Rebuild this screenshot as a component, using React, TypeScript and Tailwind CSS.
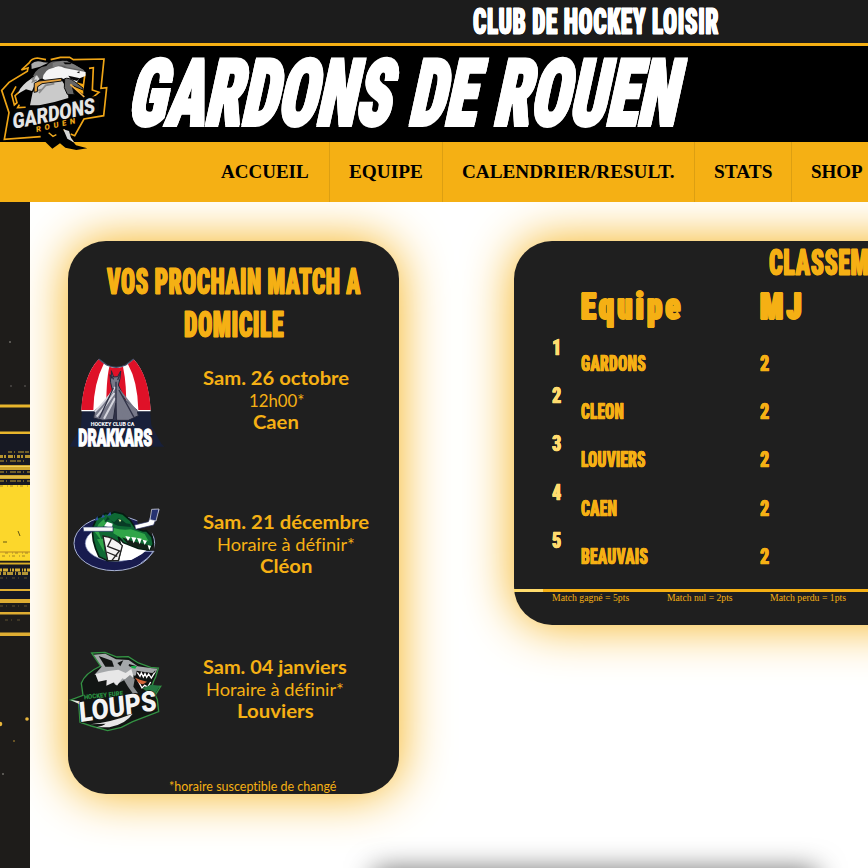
import { useLayoutEffect, useRef, type ReactNode } from "react";

const display = "font-['Roboto'] font-black [font-stretch:75%] leading-none";
const heavy = "tracking-[0.8px] [-webkit-text-stroke:1px_currentColor] [text-shadow:0.8px_0_0_currentColor,-0.8px_0_0_currentColor]";
const small = "tracking-[0.3px] [-webkit-text-stroke:0.5px_currentColor] [text-shadow:0.4px_0_0_currentColor,-0.4px_0_0_currentColor]";
const gill = "font-['Lato'] leading-none [font-variant-ligatures:none]";
const serif = "font-['Liberation_Serif'] leading-none";

/** One line of lettering, condensed or widened to fill the width of its box. */
function Fit({ className, children, skew = 0, inner = "" }: { className: string; children: ReactNode; skew?: number; inner?: string }) {
  const box = useRef<HTMLDivElement>(null);
  const text = useRef<HTMLSpanElement>(null);
  useLayoutEffect(() => {
    if (!box.current || !text.current) return;
    const ratio = box.current.clientWidth / text.current.offsetWidth;
    text.current.style.transform = `skewX(${-skew}deg) scaleX(${ratio})`;
  });
  return (
    <div ref={box} className={`flex shrink-0 whitespace-nowrap ${className}`}>
      <span ref={text} className={`block shrink-0 origin-bottom-left ${inner}`}>{children}</span>
    </div>
  );
}

function GardonsLogo() {
  return (
    <svg viewBox="0 0 336 318" className="absolute top-[2px] left-0 z-10 h-[106px] w-[112px]">
      <path d="M62 67L90 45Q92 30 116 29L155 34L178 28L210 27L221 34L312 32L303 122L320 119L311 204L254 211L228 246L205 264L228 292L262 301L229 306L196 299L180 286L157 302L118 264L13 274L24 215L3 130Z" fill="#000" />
      <path d="M64 66L88 44Q94 31 112 30L138 35M152 35L181 28L209 28L220 35L312 33L303 121L320 119L311 203L252 213L224 263L212 258M122 266L13 274L27 194L5 127L27 103L82 70L84 60L64 66" fill="none" stroke="#efa516" strokeWidth="5" />
      <path d="M48 115L35 139L43 171L51 164L45 143L59 131M267 61L280 59L277 126L297 133L274 152M255 77L249 121L238 112M58 170L53 179L77 178" fill="none" stroke="#f2a516" strokeWidth="5" />
      <path d="M215 116L227 102L249 108L250 139Z" fill="#f5a914" />
      <path d="M95 63L94 48Q107 35 130 43L145 44L120 56Z" fill="#aaa" />
      <path d="M99 84Q110 58 139 54Q151 36 179 41L200 38L211 44L223 50L252 67L257 79L244 84L218 75L176 70L139 88L120 94Z" fill="#626262" />
      <path d="M128 92Q132 65 158 60Q176 50 193 60L257 72L256 84L239 91L229 105L210 99L185 91L139 98Z" fill="#f5f5f5" />
      <path d="M158 61Q181 44 203 58L252 67L224 50L199 39Q174 36 158 46Z" fill="#7d7d7d" />
      <path d="M190 43L216 44L211 49L195 49ZM230 73L239 70L238 76ZM205 83L240 91L231 99L212 94Z" fill="#080808" />
      <path d="M60 123Q78 99 111 82L119 94L108 103L96 129L78 124L54 137Z" fill="#d7d7d7" />
      <path d="M98 133Q119 101 151 101L184 95L203 125L205 150L164 162L118 172L90 172Z" fill="#cacaca" />
      <path d="M117 135L137 112L163 107M106 129L127 124M94 94L103 88L98 101L110 96" fill="none" stroke="#888" strokeWidth="5" />
      <path d="M103 105L117 99L185 91V99L126 107L113 116L112 131L102 133Z" fill="#e2a03d" stroke="#161616" strokeWidth="3" />
      <path d="M194 92Q206 87 224 101L249 120V126L216 112L223 140L202 139L193 119Z" fill="#666" stroke="#0a0a0a" strokeWidth="3" />
      <path d="M211 109L253 147" stroke="#f2b24b" strokeWidth="5" />
      <path d="M39 216L42 186L300 142L296 190L252 203L40 242Z" fill="#050505" />
      <g transform="translate(38 243) rotate(-11) skewX(-10)">
        <text x="0" y="0" fontFamily="Roboto" fontWeight="900" fontSize="64" textLength="252" lengthAdjust="spacingAndGlyphs" fill="#e5e5e5" stroke="#111" strokeWidth="2" paintOrder="stroke">GARDONS</text>
      </g>
      <g transform="translate(109 253) rotate(-13) skewX(-9)">
        <text x="0" y="0" fontFamily="Roboto" fontWeight="900" fontSize="23" textLength="120" lengthAdjust="spacing" fill="#eca417">ROUEN</text>
      </g>
      <path d="M146 254L159 265L169 260M191 244L219 281" fill="none" stroke="#efaa20" strokeWidth="4" />
      <path d="M190 244L207 249L213 270L224 284L202 272Z" fill="#d5d5d5" />
    </svg>
  );
}

function DrakkarsLogo() {
  return (
    <svg viewBox="0 0 300 330" className="h-[110px] w-[100px]">
      <path d="M42 180L246 180L250 226L280 281L289 290L4 290L39 230Z" fill="#18203a" />
      <path d="M92 28L115 44Q144 60 174 45L197 28Q242 76 248 184H40Q46 76 92 28Z" fill="#fff" />
      <path d="M92 28L108 40Q77 101 76 180H40Q46 77 92 28ZM197 28Q242 75 248 180H211Q209 95 180 43ZM124 50Q143 57 165 50Q177 107 174 180H115Q114 94 124 50Z" fill="#df1128" />
      <path d="M92 27L116 45Q145 59 173 45L197 27" fill="none" stroke="#44516d" strokeWidth="4" />
      <path d="M79 182L118 150L131 128L157 128L171 149L207 181L211 197L181 211H105L77 204Z" fill="#34364d" />
      <path d="M126 74L131 85L130 62L137 81L149 80L158 63L156 86L151 105L160 125L171 149L207 181L211 197L181 211H146L143 160L136 208L105 211L77 204L80 183L118 150L133 120L128 98Z" fill="#777989" stroke="#242739" strokeWidth="3" />
      <path d="M142 111Q112 156 80 185M139 129Q112 169 86 200M141 144L108 206" fill="none" stroke="#d5d6de" strokeWidth="6" />
      <path d="M147 130L170 207M150 143L186 205M147 111L207 186" fill="none" stroke="#777989" strokeWidth="5" />
      <path d="M144 95V208M136 114L94 205M153 120L198 202M129 74L137 88M156 72L149 90" fill="none" stroke="#303247" strokeWidth="4" />
      <text x="68" y="228" fontFamily="Roboto" fontWeight="800" fontSize="18" textLength="131" lengthAdjust="spacingAndGlyphs" fill="#fff">HOCKEY CLUB CA</text>
      <text x="31" y="287" fontFamily="Roboto" fontWeight="900" fontSize="70" textLength="221" lengthAdjust="spacingAndGlyphs" fill="#fff" stroke="#fff" strokeWidth="4">DRAKKARS</text>
    </svg>
  );
}

function CrocLogo() {
  return (
    <svg viewBox="0 0 300 240" className="h-[80px] w-[100px]">
      <ellipse cx="139" cy="130" rx="121" ry="82" fill="#181b4e" stroke="#a9b3d4" strokeWidth="3" />
      <ellipse cx="144" cy="130" rx="92" ry="54" fill="#fff" stroke="#8e9ac4" strokeWidth="2" />
      <path d="M207 61L247 72L262 153H226Z" fill="#1f1f1f" />
      <path d="M226 154H258Q240 176 218 190" fill="none" stroke="#9ba7ce" strokeWidth="3" />
      <path d="M200 135L236 150L222 162L190 180L155 180L163 130Z" fill="#fff" />
      <path d="M75 80L87 53L101 49L112 40L125 43L139 36L165 42L187 61L203 86L225 93L235 92L252 111L256 133L244 150L211 145L166 128L151 110L160 141L151 181L119 182L93 170Q68 118 75 80Z" fill="#0e6934" stroke="#061b12" strokeWidth="5" />
      <path d="M92 72L80 95L103 125L91 92L115 70L107 58ZM87 118L109 157L105 116ZM136 84Q163 92 189 88L230 102L242 124L196 115L164 116L136 100Z" fill="#30a548" />
      <path d="M119 50L109 67L124 58L138 67L151 55L162 60L174 70L187 72L189 81L150 77L139 73" fill="#083b25" />
      <path d="M99 54L105 43L111 51M117 47L127 35L130 46M80 62L88 48L91 60" fill="#3255a2" />
      <path d="M108 79L132 83L134 71L117 65Z" fill="#fff" />
      <path d="M151 58L160 60L156 67Z" fill="#e7f2a0" />
      <path d="M162 112L193 124L244 136L241 151L182 134Z" fill="#132018" />
      <path d="M172 108L180 123L187 111ZM190 111L197 130L205 113ZM207 114L215 133L221 116ZM224 119L230 135L237 122ZM239 135L244 151L249 138Z" fill="#fff" />
      <path d="M105 108Q140 112 163 137L151 182L119 181Z" fill="#f4f4f4" stroke="#222" strokeWidth="4" />
      <path d="M130 117L119 139L158 154M116 156L148 169M132 181L154 153" fill="none" stroke="#222" strokeWidth="4" />
      <path d="M45 81H135V94H47Z" fill="#f8f8f8" stroke="#263468" strokeWidth="2" />
      <path d="M200 75L241 65L258 27L274 29L257 75L203 88Z" fill="#fff" stroke="#293162" strokeWidth="2" />
      <path d="M251 28L273 27L264 63L246 59Z" fill="#263270" stroke="#eee" strokeWidth="2" />
    </svg>
  );
}

function LoupsLogo() {
  return (
    <svg viewBox="0 0 300 300" className="h-[100px] w-[100px]">
      <path d="M71 39L111 37L147 51L181 50L211 69L248 82L271 84L263 111L256 126L251 142L278 139L262 165L268 179L272 215L194 245L160 262L119 272L70 258L36 247L32 188L8 180L45 166L40 130Q50 100 98 78Z" fill="#121614" stroke="#349344" strokeWidth="4" />
      <path d="M77 44L112 41L144 58L182 60L209 79L252 85L268 86L263 99L238 98L209 95L202 107L181 105L169 120L142 135L124 109L107 120L94 101L79 105L101 80Z" fill="#a5a8aa" />
      <path d="M92 48L132 62L138 80L112 80ZM148 69L166 61L157 79ZM183 72L207 79L197 84L182 78Z" fill="#121413" />
      <path d="M82 102L121 93L151 89L173 99L190 87L197 112L185 126L163 115L147 137L138 127L115 137L116 120L91 125Z" fill="#e7e7e7" />
      <path d="M200 118L196 140L210 160L194 160L180 140L168 120L186 105Z" fill="#8c8f91" />
      <path d="M206 92L253 100L262 91L259 110L220 113L211 120L226 136L244 128L252 138L224 151L199 140Z" fill="#100f0f" />
      <path d="M208 97L216 109L220 99L226 111L231 101L236 112L242 102L250 114L260 98M210 122L222 144L230 136L239 141L248 126" fill="none" stroke="#fff" strokeWidth="4" />
      <path d="M201 113L218 120L237 125L225 133L213 130Z" fill="#d56539" />
      <path d="M189 78L206 78L202 86L191 84Z" fill="#15ad45" />
      <path d="M223 145L249 134L276 137L260 164L245 160Z" fill="#257842" />
      <g transform="rotate(-6 110 170)">
        <text x="48" y="172" fontFamily="Roboto" fontWeight="900" fontSize="20" textLength="118" lengthAdjust="spacingAndGlyphs" fill="#2a9442">HOCKEY EURE</text>
      </g>
      <path d="M8 180L36 184L38 194Z" fill="#e8e8e8" />
      <g transform="translate(36 247) rotate(-9) skewX(-4)">
        <text x="0" y="0" fontFamily="Roboto" fontWeight="900" fontSize="84" textLength="234" lengthAdjust="spacingAndGlyphs" fill="#f4f4f4" stroke="#111" strokeWidth="4" paintOrder="stroke">LOUPS</text>
      </g>
      <path d="M66 253Q132 246 194 221Q175 251 124 262L84 262Q106 257 113 251Z" fill="#e8e8e8" />
    </svg>
  );
}

function PaintedStrip() {
  return (
    <svg viewBox="0 0 30 666" preserveAspectRatio="none" className="h-full w-[30px] shrink-0 bg-[#1e1c1a]">
      <path d="M0 232H30V400H0Z" fill="#171923" />
      <path d="M0 202.5H30V205.500H0ZM0 229.500H30V232H0Z" fill="#e8b52c" />
      <path d="M0 263H30V268H0ZM0 273H30V277H0Z" fill="#cfa62f" />
      <path d="M0 283H30V359H0Z" fill="#fcd72b" />
      <path d="M0 349H30V351H0ZM0 360.500H30V362.500H0Z" fill="#d9ae27" />
      <path d="M0 387H30V389H0ZM0 397H30V401H0ZM0 410H30V412.500H0ZM0 430.500H30V434H0Z" fill="#dfad32" />
      <g fill="none">
        <path d="M0 254.500H30" stroke="#b6942f" strokeWidth="3" strokeDasharray="3 1 2 2 5 1 1 2" />
        <path d="M8 250H30M0 259H24M0 270H30M0 279H30" stroke="#8c742c" strokeWidth="1.500" strokeDasharray="4 2 1 3 6 1" />
        <path d="M0 264.500H30M0 275H30" stroke="#f3d25a" />
        <path d="M0 284H30M5 351H30M2 354H26" stroke="#a48626" strokeDasharray="3 4 1 2" />
        <path d="M0 359.500H30" stroke="#211d17" strokeWidth="1.500" />
        <path d="M0 368H30" stroke="#d5ad34" strokeWidth="3" strokeDasharray="2 1 5 2 1 1" />
        <path d="M0 371.500H30" stroke="#b59536" strokeWidth="3" strokeDasharray="1 2 3 1 6 2" />
        <path d="M0 376H30M0 404H30M5 418H23" stroke="#605331" strokeDasharray="3 3 1 5" />
        <path d="M18 329L20 334M3 340H7" stroke="#675914" />
      </g>
      <g fill="#e9b63b">
        <circle cx="27" cy="517" r="1.800" /><circle cx="0" cy="522" r="2.300" /><circle cx="14" cy="539" r="0.700" />
      </g>
      <g fill="#6d6a66">
        <circle cx="3" cy="572" r="1" /><circle cx="10" cy="140" r="1" /><circle cx="25" cy="184" r="0.800" /><circle cx="11" cy="184" r="0.800" />
      </g>
    </svg>
  );
}

function NavItem({ label, item, text }: { label: string; item: string; text: string }) {
  return (
    <a className={`flex h-[60px] shrink-0 items-center border-r border-[#dc9f12] pb-[1px] pl-[19px] ${item}`}>
      <Fit className={`${serif} text-[19px] font-bold text-black ${text}`}>{label}</Fit>
    </a>
  );
}

const ranks = [
  { team: "GARDONS", w: "w-[65px]" },
  { team: "CLEON", w: "w-[43px]" },
  { team: "LOUVIERS", w: "w-[65px]" },
  { team: "CAEN", w: "w-[36px]" },
  { team: "BEAUVAIS", w: "w-[67px]" },
];

export default function App() {
  return (
    <div className="flex h-[868px] w-[868px] flex-col overflow-hidden bg-white text-[#f5b014]">
      <div className="h-[46px] shrink-0 border-b-[3px] border-[#f5b014] bg-[#1c1c1c] pt-[4px] pl-[473px]">
        <Fit className={`${display} w-[246px] text-[36px] text-white`} inner={heavy}>CLUB DE HOCKEY LOISIR</Fit>
      </div>
      <header className="relative h-[96px] shrink-0 bg-black pt-[2px] pl-[123px]">
        <GardonsLogo />
        <Fit skew={12.3} className={`${display} w-[549px] text-[92px] text-white`} inner="[word-spacing:4px] [-webkit-text-stroke:4px_white] [text-shadow:2px_0_0_white,-2px_0_0_white]">GARDONS DE ROUEN</Fit>
      </header>
      <nav className="flex h-[60px] shrink-0 overflow-hidden bg-[#f5b014] pl-[202px]">
        <NavItem label="ACCUEIL" item="w-[128px]" text="w-[88px]" />
        <NavItem label="EQUIPE" item="w-[113px]" text="w-[74px]" />
        <NavItem label="CALENDRIER/RESULT." item="w-[252px]" text="w-[213px]" />
        <NavItem label="STATS" item="w-[97px]" text="w-[58px]" />
        <NavItem label="SHOP" item="w-[97px]" text="w-[52px]" />
      </nav>
      <div className="flex min-h-0 flex-1">
        <PaintedStrip />
        <main className="relative flex min-w-0 flex-1 items-start gap-[115px] overflow-hidden pt-[39px] pl-[38px]">
          <section className="flex h-[553px] w-[331px] shrink-0 flex-col rounded-[38px] bg-[#1f1f1f] shadow-[0_0_50px_#f5b014]">
            <div className="flex h-[109px] shrink-0 flex-col items-center gap-[7px] pt-[23px]">
              <Fit className={`${display} w-[254px] text-[36px]`} inner={heavy}>VOS PROCHAIN MATCH A</Fit>
              <Fit className={`${display} w-[100px] text-[36px]`} inner={heavy}>DOMICILE</Fit>
            </div>
            <div className="flex h-[150px] shrink-0">
              <DrakkarsLogo />
              <div className="ml-[35px] flex h-fit flex-col items-center gap-[4px] pt-[19px]">
                <Fit className={`${gill} w-[146px] text-[18px] font-bold`}>Sam. 26 octobre</Fit>
                <Fit className={`${gill} w-[55px] text-[18px]`}>12h00*</Fit>
                <Fit className={`${gill} w-[46px] text-[18px] font-bold`}>Caen</Fit>
              </div>
            </div>
            <div className="flex h-[140px] shrink-0">
              <CrocLogo />
              <div className="ml-[35px] flex h-fit flex-col items-center gap-[4px] pt-[13px]">
                <Fit className={`${gill} w-[166px] text-[18px] font-bold`}>Sam. 21 décembre</Fit>
                <Fit className={`${gill} w-[138px] text-[18px]`}>Horaire à définir*</Fit>
                <Fit className={`${gill} w-[53px] text-[18px] font-bold`}>Cléon</Fit>
              </div>
            </div>
            <div className="flex h-[138px] shrink-0">
              <LoupsLogo />
              <div className="ml-[35px] flex h-fit flex-col items-center gap-[4px] pt-[18px]">
                <Fit className={`${gill} w-[144px] text-[18px] font-bold`}>Sam. 04 janviers</Fit>
                <Fit className={`${gill} w-[138px] text-[18px]`}>Horaire à définir*</Fit>
                <Fit className={`${gill} w-[77px] text-[18px] font-bold`}>Louviers</Fit>
              </div>
            </div>
            <Fit className={`${gill} ml-[101px] w-[167px] pt-[3px] text-[12.500px]`}>*horaire susceptible de changé</Fit>
          </section>
          <section className="h-[384px] w-[640px] shrink-0 rounded-[38px] bg-[#1f1f1f] shadow-[0_0_50px_#f5b014]">
            <div className="h-[46px] pt-[4px] pl-[255px]">
              <Fit className={`${display} w-[141px] text-[36px]`} inner={heavy}>CLASSEMENT</Fit>
            </div>
            <div className="flex h-[49px] pt-[2px] pl-[67px]">
              <Fit className={`${display} w-[103px] text-[36px]`} inner="tracking-[4px] [-webkit-text-stroke:2px_currentColor] [text-shadow:1.4px_0_0_currentColor,-1.4px_0_0_currentColor]">Equipe</Fit>
              <Fit className={`${display} ml-[76px] w-[45px] text-[36px]`} inner="tracking-[4px] [-webkit-text-stroke:2px_currentColor] [text-shadow:1.4px_0_0_currentColor,-1.4px_0_0_currentColor]">MJ</Fit>
            </div>
            {ranks.map((row, i) => (
              <div key={row.team} className="flex h-[48.200px] pl-[38px]">
                <Fit className={`${display} w-[10px] pt-[1px] text-[22px] text-[#ffdc6e]`} inner={small}>{i + 1}</Fit>
                <div className="ml-[19px] w-[179px] pt-[17px]">
                  <Fit className={`${display} ${row.w} text-[22px]`} inner={small}>{row.team}</Fit>
                </div>
                <div className="pt-[17px]">
                  <Fit className={`${display} w-[10px] text-[22px]`} inner={small}>2</Fit>
                </div>
              </div>
            ))}
            <div className="mt-[12px] flex h-[3px] bg-[#f5b014]">
              <div className="w-[29px] bg-[#ffdc6e]" />
            </div>
            <div className="flex pt-[1px] pl-[38px]">
              <Fit className={`${serif} w-[77px] text-[10.500px]`}>Match gagné = 5pts</Fit>
              <Fit className={`${serif} ml-[38px] w-[66px] text-[10.500px]`}>Match nul = 2pts</Fit>
              <Fit className={`${serif} ml-[37px] w-[76px] text-[10.500px]`}>Match perdu = 1pts</Fit>
            </div>
          </section>
          <div className="absolute top-[668px] left-[344px] h-[40px] w-[443px] shadow-[0_0_28px_#666]" />
        </main>
      </div>
    </div>
  );
}
